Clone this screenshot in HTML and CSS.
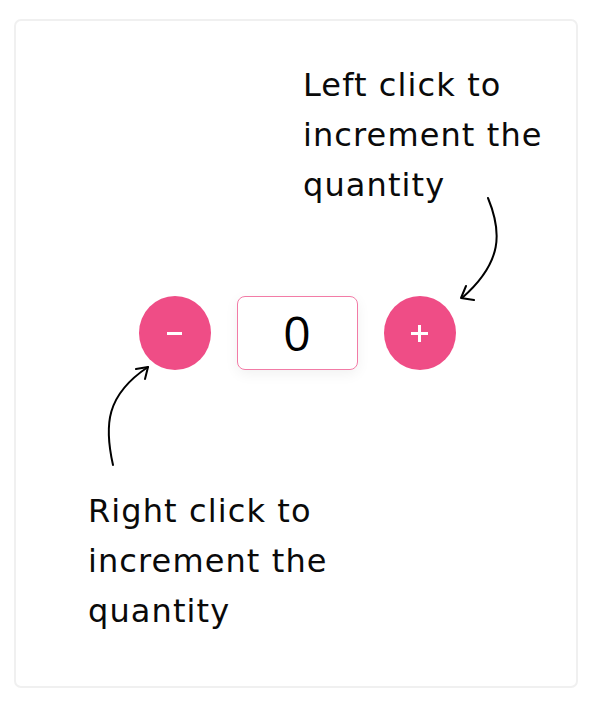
FILE: index.html
```html
<!DOCTYPE html>
<html lang="en">
<head>
<meta charset="utf-8">
<title>Quantity</title>
<link rel="stylesheet" href="styles.css">
</head>
<body>
  <div class="card">
    <p class="note note-top">Left click to<br>increment the<br>quantity</p>
    <div class="controls">
      <button class="btn" aria-label="decrement"><span class="minus"></span></button>
      <div class="qty">0</div>
      <button class="btn" aria-label="increment"><span class="plus"></span></button>
    </div>
    <p class="note note-bottom">Right click to<br>increment the<br>quantity</p>
    <svg class="arrows" width="564" height="669" viewBox="0 0 564 669" aria-hidden="true">
      <g transform="translate(-14 -19)" fill="none" stroke="#000" stroke-width="2" stroke-linecap="round" stroke-linejoin="round">
        <path d="M488 198 C 502 232, 503 262, 462 298"/>
        <path d="M466 286 L 461 298 L 474 300"/>
        <path d="M113 465 C 104 425, 106 395, 148 367"/>
        <path d="M136 369 L 148 367 L 145 379"/>
      </g>
    </svg>
  </div>
</body>
</html>
```
FILE: styles.css
```css
* { box-sizing: border-box; }
html, body { margin: 0; background: #fff; }
body {
  padding: 19px 14px 18px;
  font-family: "Open Sans", "Liberation Sans", sans-serif;
  color: #111;
}
.card {
  position: relative;
  height: 669px;
  border: 2px solid #f0f0f0;
  border-radius: 7px;
  padding: 39px 0 0;
  display: flex;
  flex-direction: column;
}
.note {
  margin: 0;
  font-family: "DejaVu Sans", "Open Sans", sans-serif;
  font-size: 32px;
  line-height: 50px;
  letter-spacing: 1.1px;
  font-weight: 400;
  color: #0a0a0a;
}
.note-top { margin-left: 287px; }
.note-bottom { margin-left: 72px; margin-top: 116px; }
.controls {
  margin-top: 86px;
  display: flex;
  justify-content: center;
  align-items: center;
  gap: 26px;
  padding-left: 2px;
}
.btn {
  width: 72px;
  height: 74px;
  border: none;
  border-radius: 50%;
  background: #ef4d86;
  display: flex;
  align-items: center;
  justify-content: center;
  padding: 0;
  position: relative;
}
.minus {
  display: block;
  width: 15px;
  height: 3px;
  background: #fff;
}
.plus {
  display: block;
  width: 17px;
  height: 17px;
  position: relative;
}
.plus::before, .plus::after {
  content: "";
  position: absolute;
  background: #fff;
}
.plus::before { left: 0; right: 0; top: 7px; height: 3px; }
.plus::after { top: 0; bottom: 0; left: 7px; width: 3px; }
.qty {
  width: 121px;
  height: 74px;
  border: 1px solid #f27ba6;
  border-radius: 8px;
  box-shadow: 0 4px 14px rgba(0, 0, 0, 0.06);
  display: flex;
  align-items: center;
  justify-content: center;
  font-size: 48px;
  line-height: 1;
  color: #000;
}
.arrows {
  position: absolute;
  left: -2px;
  top: -2px;
  pointer-events: none;
}
```
